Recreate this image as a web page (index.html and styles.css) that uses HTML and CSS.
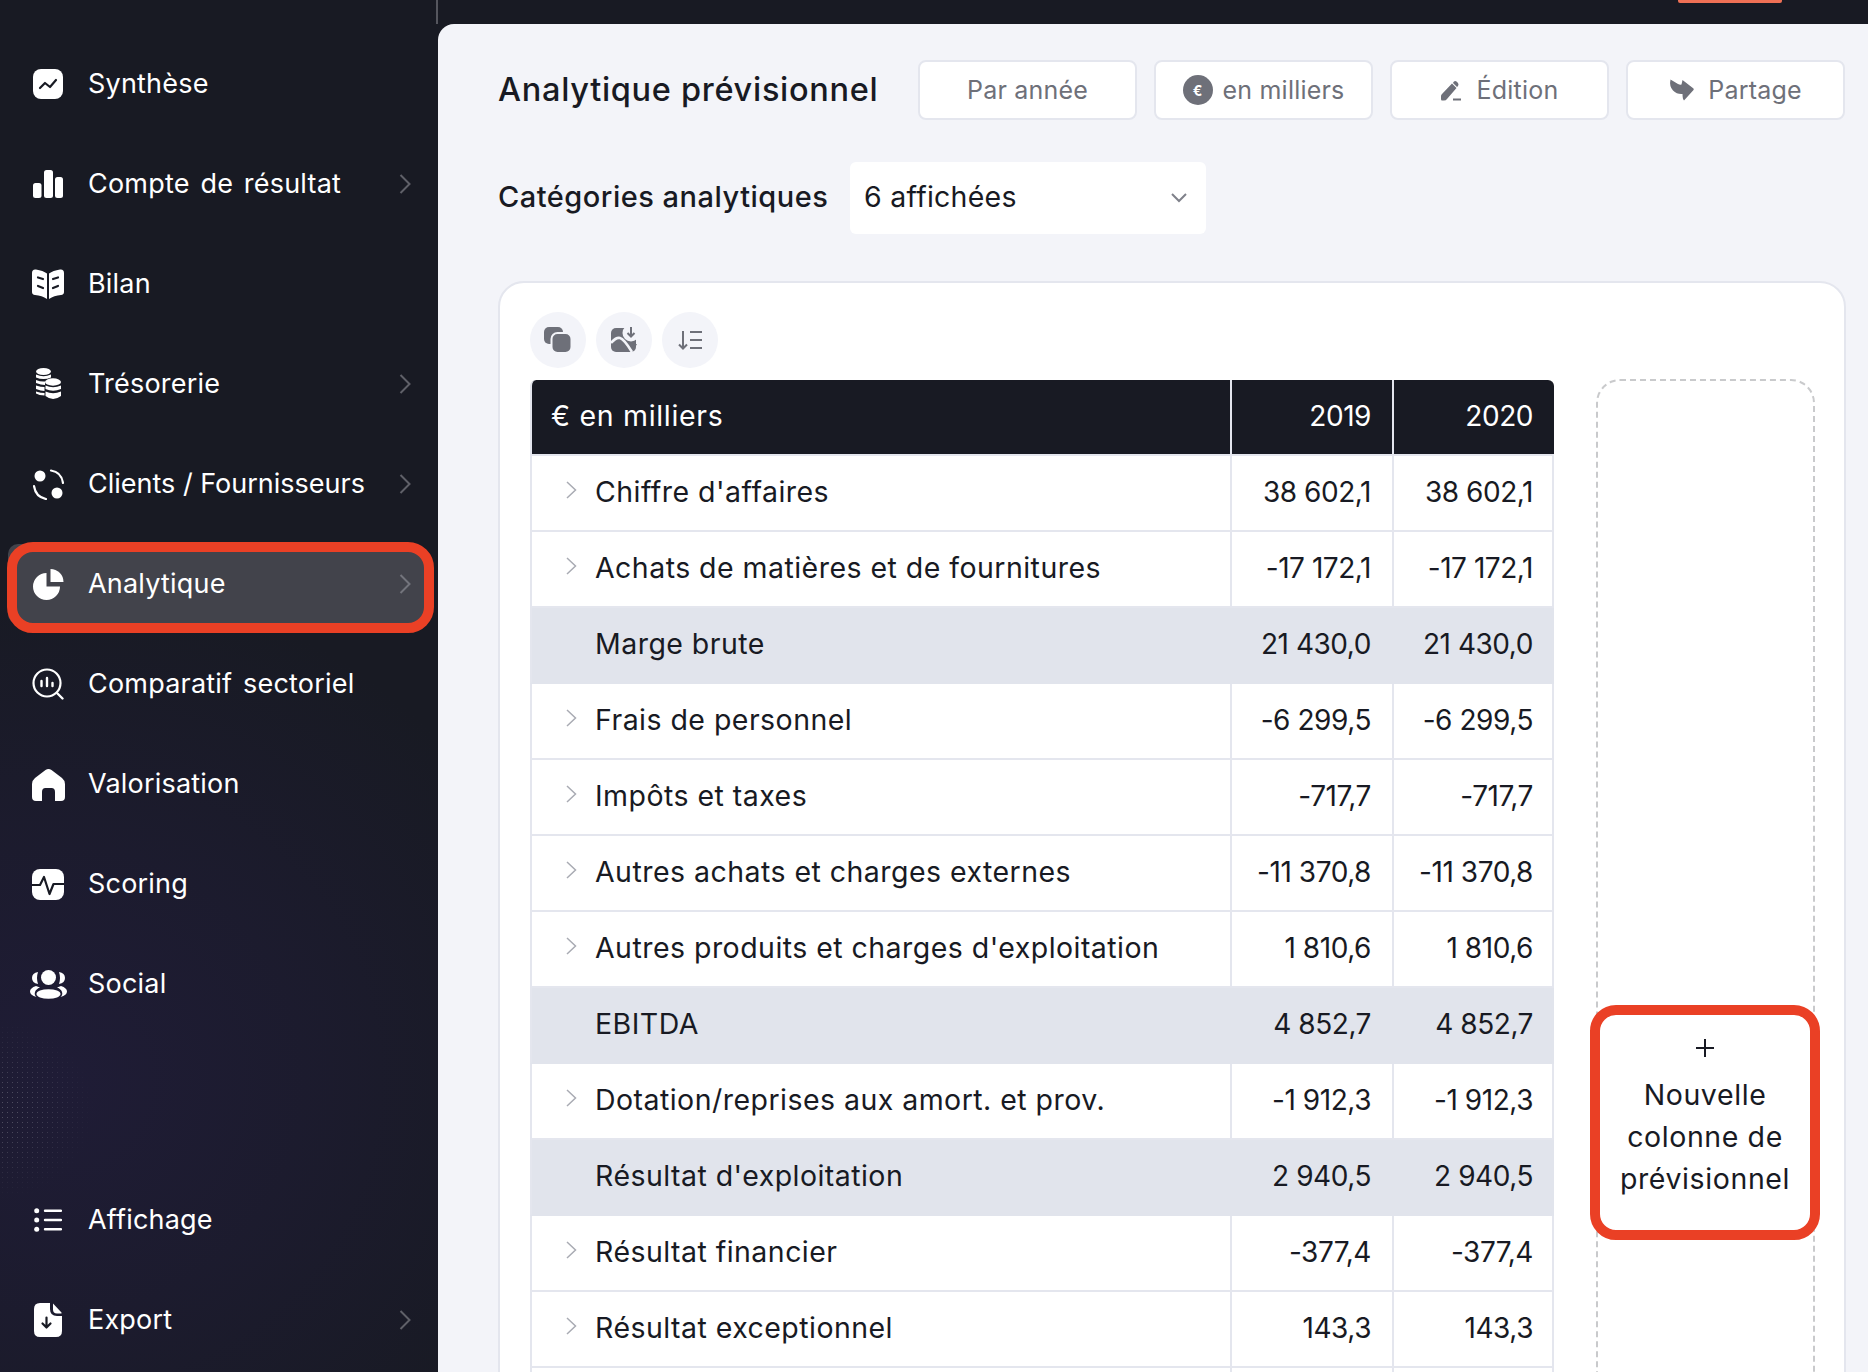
FILE: index.html
```html
<!DOCTYPE html>
<html lang="fr">
<head>
<meta charset="utf-8">
<title>Analytique prévisionnel</title>
<link rel="stylesheet" href="styles.css">
</head>
<body>
<aside class="sidebar">
  <div class="dots"></div>
  <nav class="nav">
    <a class="nav-item"><span class="nav-icon"><svg width="30" height="30" viewBox="0 0 30 30"><rect width="30" height="30" rx="8" fill="#fff"/><path d="M7 19l5-5 5 4 6-7" fill="none" stroke="#181a23" stroke-width="2.2" stroke-linecap="round" stroke-linejoin="round"/></svg></span><span class="nav-label">Synthèse</span></a>
    <a class="nav-item"><span class="nav-icon"><svg width="30" height="28" viewBox="0 0 30 28"><rect x="0" y="13" width="8.5" height="15" rx="2.5" fill="#fff"/><rect x="11" y="0" width="9" height="28" rx="2.5" fill="#fff"/><rect x="22" y="7" width="8" height="21" rx="2.5" fill="#fff"/></svg></span><span class="nav-label">Compte de résultat</span><svg class="chev" width="12" height="20" viewBox="0 0 12 20"><path d="M1.5 1l9 9-9 9" fill="none" stroke="currentColor" stroke-width="2"/></svg></a>
    <a class="nav-item"><span class="nav-icon"><svg width="32" height="30" viewBox="0 0 32 30"><path d="M0 4Q0 0 4 .5Q11 1.500 15 4.500V30Q10 26.500 3 26Q0 25.500 0 23ZM32 4Q32 0 28 .5Q21 1.500 17 4.500V30Q22 26.500 29 26Q32 25.500 32 23Z" fill="#fff"/><path d="M6 8.500l5 1.500M6 17l5 2M21 10l5-1.500M21 19l5-2" stroke="#181a23" stroke-width="2.200" stroke-linecap="round"/></svg></span><span class="nav-label">Bilan</span></a>
    <a class="nav-item"><span class="nav-icon"><svg width="25" height="32" viewBox="0 0 25 32"><g fill="#fff"><ellipse cx="7.500" cy="3.500" rx="7.500" ry="3.500"/><path d="M0 6.500Q7.500 10 15 6.500V9.500Q7.500 12.500 0 9.500ZM0 12Q5 14 9 13.500V17Q5 17 0 15ZM0 17.500Q5 19 8.500 19V23Q5 23 0 21ZM0 23.500Q5 25 8.500 25V27.500Q3 27.500 0 25.500Z"/><ellipse cx="17" cy="14" rx="8" ry="3.700"/><path d="M9.500 17.500Q17 21 25 17.500V21Q17 24.500 9.500 21ZM9.500 23.500Q17 27 25 23.500V28Q17 34 9.500 28Z"/></g></svg></span><span class="nav-label">Trésorerie</span><svg class="chev" width="12" height="20" viewBox="0 0 12 20"><path d="M1.500 1l9 9-9 9" fill="none" stroke="currentColor" stroke-width="2"/></svg></a>
    <a class="nav-item"><span class="nav-icon"><svg width="31" height="31" viewBox="0 0 31 31"><circle cx="7" cy="7" r="5.500" fill="#fff"/><circle cx="24" cy="24" r="5.500" fill="#fff"/><path d="M18 1.500Q28.500 3 30 14M1 17Q2.500 28 13 30" fill="none" stroke="#fff" stroke-width="2.200" stroke-linecap="round"/></svg></span><span class="nav-label tight">Clients / Fournisseurs</span><svg class="chev" width="12" height="20" viewBox="0 0 12 20"><path d="M1.500 1l9 9-9 9" fill="none" stroke="currentColor" stroke-width="2"/></svg></a>
    <a class="nav-item active"><span class="nav-icon"><svg width="31" height="31" viewBox="0 0 31 31"><path d="M13.500 4A13.500 13.500 0 1 0 27 17.500H13.500Z" fill="#fff"/><path d="M17.500 0A13 13 0 0 1 30.500 13H17.500Z" fill="#fff"/></svg></span><span class="nav-label">Analytique</span><svg class="chev" width="12" height="20" viewBox="0 0 12 20"><path d="M1.500 1l9 9-9 9" fill="none" stroke="currentColor" stroke-width="2"/></svg></a>
    <a class="nav-item"><span class="nav-icon"><svg width="32" height="32" viewBox="0 0 32 32"><circle cx="15" cy="15" r="13.500" fill="none" stroke="#fff" stroke-width="2.200"/><path d="M9.500 13v5M15 10v8M20.500 15v3M25.500 25.500l5 5" fill="none" stroke="#fff" stroke-width="2.400" stroke-linecap="round"/></svg></span><span class="nav-label">Comparatif sectoriel</span></a>
    <a class="nav-item"><span class="nav-icon"><svg width="33" height="33" viewBox="0 0 33 33"><path d="M13.500 2Q16.500 0 19.500 2L30 10Q33 12.500 33 16V29Q33 33 29 33H23V24Q23 20 19.500 20H13.500Q10 20 10 24V33H4Q0 33 0 29V16Q0 12.500 3 10Z" fill="#fff"/></svg></span><span class="nav-label">Valorisation</span></a>
    <a class="nav-item"><span class="nav-icon"><svg width="32" height="31" viewBox="0 0 32 31"><rect width="32" height="31" rx="8" fill="#fff"/><path d="M0 16H8L12 8L17.500 25L21.500 15H32" fill="none" stroke="#181a23" stroke-width="2.200" stroke-linejoin="round"/></svg></span><span class="nav-label">Scoring</span></a>
    <a class="nav-item"><span class="nav-icon"><svg width="37" height="29" viewBox="0 0 37 29"><g fill="#fff"><circle cx="18.500" cy="7.500" r="7.500"/><ellipse cx="18.500" cy="24" rx="12" ry="4.800"/><path d="M8 2Q2 3 2 8T8 14Q6 8 8 2ZM29 2Q35 3 35 8T29 14Q31 8 29 2ZM6 16Q0 18 0 21.500T6.500 27Q4 25 5 22T10 17.500ZM31 16Q37 18 37 21.500T30.500 27Q33 25 32 22T27 17.500Z"/></g></svg></span><span class="nav-label">Social</span></a>
  </nav>
  <nav class="nav nav-bottom">
    <a class="nav-item"><span class="nav-icon"><svg width="28" height="24" viewBox="0 0 28 24"><circle cx="2.700" cy="2.700" r="2.500" fill="#fff"/><circle cx="2.700" cy="12" r="2.500" fill="#fff"/><circle cx="2.700" cy="21.300" r="2.500" fill="#fff"/><path d="M11 2.700H27M11 12H27M11 21.300H27" stroke="#fff" stroke-width="2.400" stroke-linecap="round"/></svg></span><span class="nav-label">Affichage</span></a>
    <a class="nav-item"><span class="nav-icon"><svg width="28" height="34" viewBox="0 0 28 34"><path d="M6 0H16V6Q16 13 23 13H28V28Q28 34 22 34H6Q0 34 0 28V6Q0 0 6 0Z" fill="#fff"/><path d="M19 0.500L27.500 9.500V10.500H23Q19 10.500 19 6.500Z" fill="#fff"/><path d="M12.500 14.500V24M8.500 20.500l4 4 4-4" fill="none" stroke="#181a23" stroke-width="2.200" stroke-linecap="round" stroke-linejoin="round"/></svg></span><span class="nav-label">Export</span><svg class="chev" width="12" height="20" viewBox="0 0 12 20"><path d="M1.500 1l9 9-9 9" fill="none" stroke="currentColor" stroke-width="2"/></svg></a>
  </nav>
</aside>
<div class="main">
  <div class="topbar"><span class="top-rule"></span><span class="top-mark"></span></div>
  <section class="panel">
    <header class="page-head">
      <h1 class="page-title">Analytique prévisionnel</h1>
      <div class="actions">
        <button class="btn">Par année</button>
        <button class="btn gap-10"><span class="coin">€</span>en milliers</button>
        <button class="btn gap-15"><svg width="21" height="21" viewBox="0 0 21 21"><path d="M1 14L11 3.500L15.500 8L6 19Q5 20.500 3 20.500H1Q0 20.500 0 19V16Q0 15 1 14Z" fill="#6e7079"/><path d="M12.500 2Q14 .5 15.500 1.500L17 3Q18 4.500 17 6L16 7L12 3Z" fill="#6e7079"/><path d="M12 19.500H20" stroke="#6e7079" stroke-width="2"/></svg>Édition</button>
        <button class="btn gap-14"><svg width="25" height="22" viewBox="0 0 25 22"><path d="M1.500 .5L9 5Q11 6 12.500 5.500L13.500 1L24.500 9.500Q25 10.500 24.500 11L15 21.500Q13.500 20 13.500 15Q8 15.500 4 11.500Q0 7 1.500 .5Z" fill="#6e7079"/></svg>Partage</button>
      </div>
    </header>
    <div class="filter-row">
      <label class="filter-label">Catégories analytiques</label>
      <div class="select"><span class="select-text">6 affichées</span><svg width="16" height="10" viewBox="0 0 16 10"><path d="M1 1l7 7 7-7" fill="none" stroke="#7f818a" stroke-width="2"/></svg></div>
    </div>
    <div class="card">
      <div class="toolbar">
        <span class="round"><svg width="30" height="30" viewBox="0 0 30 30"><rect x="1" y="2" width="19" height="17" rx="5" fill="#6e7079"/><rect x="8.500" y="8" width="20" height="20" rx="6" fill="#6e7079" stroke="#f3f4f9" stroke-width="2"/></svg></span>
        <span class="round"><svg width="27" height="26" viewBox="0 0 27 26"><rect x="0" y="1" width="25" height="24" rx="5" fill="#6e7079"/><circle cx="20" cy="6" r="8.500" fill="#f3f4f9"/><path d="M0 16Q5 10 9 11Q13 12 21 25" fill="none" stroke="#f3f4f9" stroke-width="2.600"/><path d="M20 0V9M16.500 6l3.500 3.500 3.500-3.500" fill="none" stroke="#6e7079" stroke-width="2"/><path d="M22 15L26 17.500L23.500 20.500Z" fill="#6e7079"/></svg></span>
        <span class="round"><svg width="24" height="20" viewBox="0 0 24 20"><path d="M5 1V18.500M1 14.500l4 4 4-4" fill="none" stroke="#6e7079" stroke-width="2"/><path d="M12 2H24M12 10H24M12 18H24" stroke="#6e7079" stroke-width="2"/></svg></span>
      </div>
      <div class="workspace">
        <table class="grid">
          <colgroup><col class="col-label"><col class="col-year"><col class="col-year"></colgroup>
          <thead>
            <tr><th class="th-label">€ en milliers</th><th class="num">2019</th><th class="num last">2020</th></tr>
          </thead>
          <tbody>
            <tr><td class="lbl"><svg class="tog" width="11" height="18" viewBox="0 0 11 18"><path d="M1 1l8.500 8L1 17" fill="none" stroke="currentColor" stroke-width="1.500"/></svg>Chiffre d'affaires</td><td class="num">38 602,1</td><td class="num last">38 602,1</td></tr>
            <tr><td class="lbl"><svg class="tog" width="11" height="18" viewBox="0 0 11 18"><path d="M1 1l8.500 8L1 17" fill="none" stroke="currentColor" stroke-width="1.500"/></svg>Achats de matières et de fournitures</td><td class="num">-17 172,1</td><td class="num last">-17 172,1</td></tr>
            <tr class="total"><td class="lbl">Marge brute</td><td class="num">21 430,0</td><td class="num last">21 430,0</td></tr>
            <tr><td class="lbl"><svg class="tog" width="11" height="18" viewBox="0 0 11 18"><path d="M1 1l8.500 8L1 17" fill="none" stroke="currentColor" stroke-width="1.500"/></svg>Frais de personnel</td><td class="num">-6 299,5</td><td class="num last">-6 299,5</td></tr>
            <tr><td class="lbl"><svg class="tog" width="11" height="18" viewBox="0 0 11 18"><path d="M1 1l8.500 8L1 17" fill="none" stroke="currentColor" stroke-width="1.500"/></svg>Impôts et taxes</td><td class="num">-717,7</td><td class="num last">-717,7</td></tr>
            <tr><td class="lbl"><svg class="tog" width="11" height="18" viewBox="0 0 11 18"><path d="M1 1l8.500 8L1 17" fill="none" stroke="currentColor" stroke-width="1.500"/></svg>Autres achats et charges externes</td><td class="num">-11 370,8</td><td class="num last">-11 370,8</td></tr>
            <tr><td class="lbl"><svg class="tog" width="11" height="18" viewBox="0 0 11 18"><path d="M1 1l8.500 8L1 17" fill="none" stroke="currentColor" stroke-width="1.500"/></svg>Autres produits et charges d'exploitation</td><td class="num">1 810,6</td><td class="num last">1 810,6</td></tr>
            <tr class="total"><td class="lbl">EBITDA</td><td class="num">4 852,7</td><td class="num last">4 852,7</td></tr>
            <tr><td class="lbl"><svg class="tog" width="11" height="18" viewBox="0 0 11 18"><path d="M1 1l8.500 8L1 17" fill="none" stroke="currentColor" stroke-width="1.500"/></svg>Dotation/reprises aux amort. et prov.</td><td class="num">-1 912,3</td><td class="num last">-1 912,3</td></tr>
            <tr class="total"><td class="lbl">Résultat d'exploitation</td><td class="num">2 940,5</td><td class="num last">2 940,5</td></tr>
            <tr><td class="lbl"><svg class="tog" width="11" height="18" viewBox="0 0 11 18"><path d="M1 1l8.500 8L1 17" fill="none" stroke="currentColor" stroke-width="1.500"/></svg>Résultat financier</td><td class="num">-377,4</td><td class="num last">-377,4</td></tr>
            <tr><td class="lbl"><svg class="tog" width="11" height="18" viewBox="0 0 11 18"><path d="M1 1l8.500 8L1 17" fill="none" stroke="currentColor" stroke-width="1.500"/></svg>Résultat exceptionnel</td><td class="num">143,3</td><td class="num last">143,3</td></tr>
            <tr><td class="lbl"></td><td class="num"></td><td class="num last"></td></tr>
          </tbody>
        </table>
        <div class="new-col">
          <button class="new-btn"><span class="plus"></span><span>Nouvelle colonne de prévisionnel</span></button>
        </div>
      </div>
    </div>
  </section>
</div>
</body>
</html>
```

FILE: styles.css
```css
* { box-sizing: border-box; }
html, body { height: 100%; }
svg { flex: none; }
body {
  margin: 0;
  height: 100vh;
  display: flex;
  overflow: hidden;
  background: #181a23;
  font-family: Inter, "Noto Sans", "Liberation Sans", sans-serif;
  color: #181a23;
}
.sidebar {
  position: relative;
  width: 438px;
  flex: none;
  display: flex;
  flex-direction: column;
  padding: 34px 0 2px;
  background:
    radial-gradient(ellipse 520px 500px at 60px 1080px, #1f1c36 0%, rgba(31, 28, 54, .55) 50%, rgba(24, 26, 35, 0) 100%),
    #181a23;
}
.dots {
  position: absolute;
  left: 0;
  top: 1020px;
  width: 95px;
  height: 180px;
  background-image: radial-gradient(circle, rgba(255, 255, 255, .22) .7px, transparent 1px);
  background-size: 5px 5px;
  -webkit-mask-image: radial-gradient(ellipse 95px 90px at 0 50%, #000 20%, transparent 100%);
  mask-image: radial-gradient(ellipse 95px 90px at 0 50%, #000 20%, transparent 100%);
}
.nav { position: relative; display: flex; flex-direction: column; }
.nav-bottom { margin-top: auto; }
.nav-item {
  position: relative;
  height: 80px;
  margin: 10px 14px 10px 8px;
  padding: 0 13px 0 25px;
  display: flex;
  align-items: center;
  gap: 25px;
  border-radius: 10px;
  color: #fff;
  font-size: 27px;
  letter-spacing: .2px;
  word-spacing: 3px;
}
.nav-icon { width: 30px; flex: none; display: flex; justify-content: center; align-items: center; }
.nav-label { flex: 1; white-space: nowrap; padding-bottom: 2px; }
.nav-label.tight { letter-spacing: 0; word-spacing: 0; }
.chev { color: #5f6068; }
.nav-item.active { background: #42434b; }
.nav-item.active .chev { color: #73747c; }
.nav-item.active::after {
  content: "";
  position: absolute;
  left: -1px; right: -10px; top: -2px; bottom: -9px;
  border: 10px solid #ea4025;
  border-radius: 26px;
}
.main { flex: 1; min-width: 0; display: flex; flex-direction: column; position: relative; }
.topbar { height: 24px; flex: none; position: relative; }
.top-rule { position: absolute; left: -2px; top: 0; width: 2px; height: 24px; background: #55565e; }
.top-mark { position: absolute; left: 1240px; top: 0; width: 104px; height: 3px; background: #ee7055; border-radius: 0 0 2px 2px; }
.panel {
  flex: 1;
  min-height: 0;
  background: #f3f4f9;
  border-top-left-radius: 16px;
  padding: 36px 23px 0 60px;
  overflow: hidden;
}
.page-head { display: flex; align-items: center; height: 60px; }
.page-title { flex: 1; margin: 0 0 2px; font-size: 32.500px; font-weight: 500; letter-spacing: .7px; white-space: nowrap; }
.actions { display: flex; gap: 17px; align-self: flex-start; }
.btn {
  width: 219px;
  height: 60px;
  display: flex;
  align-items: center;
  justify-content: center;
  background: #fff;
  border: 2px solid #e4e6ee;
  border-radius: 8px;
  font: inherit;
  font-size: 25px;
  letter-spacing: .2px;
  color: #6e7079;
  padding: 0;
}
.gap-10 { gap: 10px; }
.gap-14 { gap: 14px; }
.gap-15 { gap: 15px; }
.coin {
  width: 30px; height: 30px;
  border-radius: 50%;
  background: #6e7079;
  color: #fff;
  font-size: 14px;
  font-weight: 700;
  display: flex;
  align-items: center;
  justify-content: center;
}
.filter-row { display: flex; align-items: center; margin-top: 42px; }
.filter-label { width: 352px; font-size: 29px; font-weight: 500; letter-spacing: .5px; white-space: nowrap; padding-bottom: 4px; }
.select {
  width: 356px;
  height: 72px;
  padding: 0 19px 0 14px;
  display: flex;
  align-items: center;
  justify-content: space-between;
  background: #fff;
  border-radius: 6px;
  font-size: 28.500px;
  letter-spacing: .25px;
}
.select-text { padding-bottom: 4px; }
.card {
  margin: 47px -1px 0 0;
  height: 1200px;
  padding: 29px 28px 0 30px;
  background: #fff;
  border: 2px solid #e4e6ee;
  border-radius: 26px;
}
.toolbar { display: flex; gap: 10px; }
.round {
  width: 56px; height: 56px;
  border-radius: 50%;
  background: #f3f4f9;
  display: flex;
  align-items: center;
  justify-content: center;
}
.workspace { display: flex; align-items: flex-start; margin-top: 12px; }
.grid {
  width: 1024px;
  table-layout: fixed;
  border-collapse: separate;
  border-spacing: 0;
  font-size: 28.500px;
  letter-spacing: .46px;
}
.col-label { width: 700px; }
.col-year { width: 162px; }
.grid th {
  height: 76px;
  background: #181a23;
  color: #fff;
  font-weight: 400;
  text-align: left;
  padding: 0 0 3px 19px;
  border-left: 2px solid #e4e6ee;
  border-bottom: 2px solid #e4e6ee;
}
.grid th.th-label { border-top-left-radius: 6px; letter-spacing: .7px; }
.grid th:last-child { border-top-right-radius: 6px; }
.grid td {
  height: 76px;
  padding: 0 21px 3px 0;
  border-left: 2px solid #e4e6ee;
  border-bottom: 2px solid #e4e6ee;
  white-space: nowrap;
}
.grid td:last-child { border-right: 2px solid #e4e6ee; }
.grid .num { font-size: 28px; letter-spacing: -.45px; text-align: right; padding-left: 0; padding-right: 21px; }
.grid td.num.last { padding-right: 19px; }
.grid td.lbl { text-align: left; padding-left: 63px; position: relative; }
.tog { position: absolute; left: 34px; top: 25px; color: #a9abb3; }
.total td { background: #e1e4ec; border-left-color: #e1e4ec; border-bottom-color: #e1e4ec; }
.total td:first-child { border-left-color: #e4e6ee; }
.total td:last-child { border-right-color: #e1e4ec; }
.new-col {
  width: 219px;
  height: 1100px;
  margin-left: 42px;
  margin-top: -1px;
  border: 2px dashed #c9cacc;
  border-radius: 24px;
  padding-top: 624px;
}
.new-btn {
  width: 230px;
  height: 235px;
  margin: 0 -8px;
  padding: 0 0 6px;
  display: flex;
  flex-direction: column;
  align-items: center;
  justify-content: center;
  gap: 17px;
  background: #fff;
  border: 10px solid #ea4025;
  border-radius: 26px;
  font: inherit;
  font-size: 28.500px;
  letter-spacing: .6px;
  line-height: 42px;
  word-spacing: normal;
  color: #181a23;
  text-align: center;
}
.plus {
  position: relative;
  width: 18px;
  height: 18px;
  background:
    linear-gradient(#181a23, #181a23) center / 18px 2px no-repeat,
    linear-gradient(#181a23, #181a23) center / 2px 18px no-repeat;
}
```
